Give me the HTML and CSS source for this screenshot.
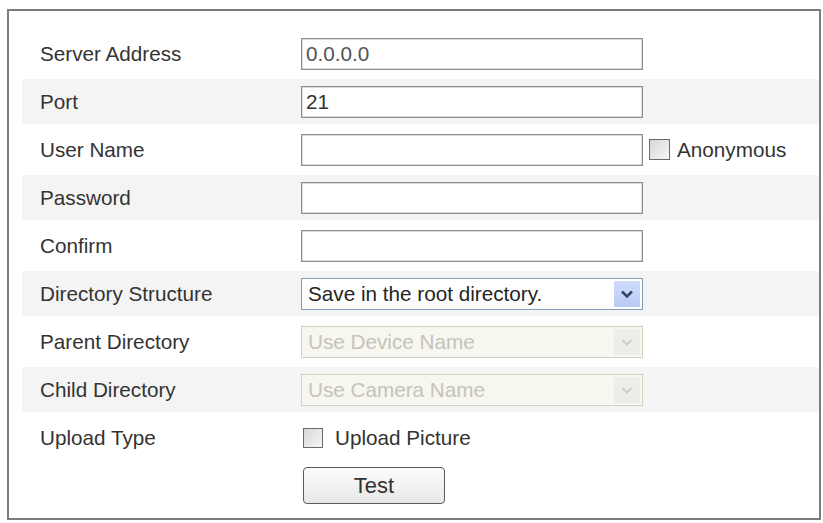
FILE: index.html
```html
<!DOCTYPE html>
<html>
<head>
<meta charset="utf-8">
<link rel="stylesheet" href="styles.css">
</head>
<body>
<div class="panel">
  <div class="row">
    <span class="label">Server Address</span>
    <div class="input">0.0.0.0</div>
  </div>
  <div class="row alt">
    <span class="label">Port</span>
    <div class="input dark">21</div>
  </div>
  <div class="row">
    <span class="label">User Name</span>
    <div class="input"></div>
    <span class="checkbox anon"></span>
    <span class="cbtext">Anonymous</span>
  </div>
  <div class="row alt">
    <span class="label">Password</span>
    <div class="input"></div>
  </div>
  <div class="row">
    <span class="label">Confirm</span>
    <div class="input"></div>
  </div>
  <div class="row alt">
    <span class="label">Directory Structure</span>
    <div class="select">
      <span class="seltext">Save in the root directory.</span>
      <span class="arrow"><svg width="14" height="10" viewBox="0 0 14 10"><path d="M2 2.5 L7 7.5 L12 2.5" fill="none" stroke="#33466e" stroke-width="2.6"/></svg></span>
    </div>
  </div>
  <div class="row">
    <span class="label">Parent Directory</span>
    <div class="select disabled">
      <span class="seltext">Use Device Name</span>
      <span class="arrow"><svg width="14" height="10" viewBox="0 0 14 10"><path d="M2.5 3 L7 7.5 L11.5 3" fill="none" stroke="#cbcbc6" stroke-width="1.8"/></svg></span>
    </div>
  </div>
  <div class="row alt">
    <span class="label">Child Directory</span>
    <div class="select disabled">
      <span class="seltext">Use Camera Name</span>
      <span class="arrow"><svg width="14" height="10" viewBox="0 0 14 10"><path d="M2.5 3 L7 7.5 L11.5 3" fill="none" stroke="#cbcbc6" stroke-width="1.8"/></svg></span>
    </div>
  </div>
  <div class="row">
    <span class="label">Upload Type</span>
    <span class="checkbox upload"></span>
    <span class="cbtext">Upload Picture</span>
  </div>
  <div class="row">
    <span class="label"></span>
    <div class="button">Test</div>
  </div>
</div>
</body>
</html>
```
FILE: styles.css
```css
html, body {
  margin: 0;
  padding: 0;
  background: #ffffff;
}
body {
  font-family: "Liberation Sans", Arial, sans-serif;
  font-size: 20.7px;
  color: #333333;
}
.panel {
  box-sizing: border-box;
  margin: 9px 0 0 7px;
  width: 814px;
  height: 511px;
  border: 2px solid #7c7c7c;
  padding: 20px 0 0 13px;
}
.row {
  display: flex;
  align-items: center;
  height: 45px;
  margin-bottom: 3px;
}
.row.alt {
  background: #f4f4f4;
}
.label {
  box-sizing: border-box;
  width: 279px;
  padding-left: 18px;
  flex: none;
}
.input {
  box-sizing: border-box;
  width: 342px;
  height: 32px;
  border: 1px solid #8c8c8c;
  box-shadow: inset 0 0 0 1px #dcdcdc;
  background: #ffffff;
  padding-left: 4px;
  display: flex;
  align-items: center;
  color: #555555;
  flex: none;
}
.input.dark {
  color: #333333;
}
.select {
  box-sizing: border-box;
  width: 342px;
  height: 32px;
  border: 1px solid #7f9db9;
  background: #ffffff;
  display: flex;
  align-items: center;
  padding: 2px 2px 2px 6px;
  color: #252525;
  flex: none;
}
.seltext {
  flex: 1;
}
.arrow {
  width: 26px;
  height: 100%;
  background: linear-gradient(#cfdcfb, #b8c9f4);
  display: flex;
  align-items: center;
  justify-content: center;
}
.select.disabled {
  border-color: #d2d0c4;
  background: #f7f6ef;
  color: #c4c4bc;
}
.select.disabled .arrow {
  background: #ededea;
}
.checkbox {
  box-sizing: border-box;
  width: 20px;
  height: 20px;
  border: 1.5px solid #656b72;
  background: linear-gradient(135deg, #d6d6d6, #f7f7f7);
  flex: none;
}
.checkbox.anon {
  margin-left: 6px;
  margin-right: 7px;
  width: 21px;
  height: 21px;
}
.checkbox.upload {
  margin-left: 2px;
  margin-right: 12px;
}
.cbtext {
  color: #333333;
}
.button {
  box-sizing: border-box;
  margin-left: 2px;
  width: 142px;
  height: 37px;
  border: 1.5px solid #555b60;
  border-radius: 4px;
  background: linear-gradient(#fbfbfb, #e8e8e8);
  display: flex;
  align-items: center;
  justify-content: center;
  color: #333333;
  font-size: 22px;
}
```
